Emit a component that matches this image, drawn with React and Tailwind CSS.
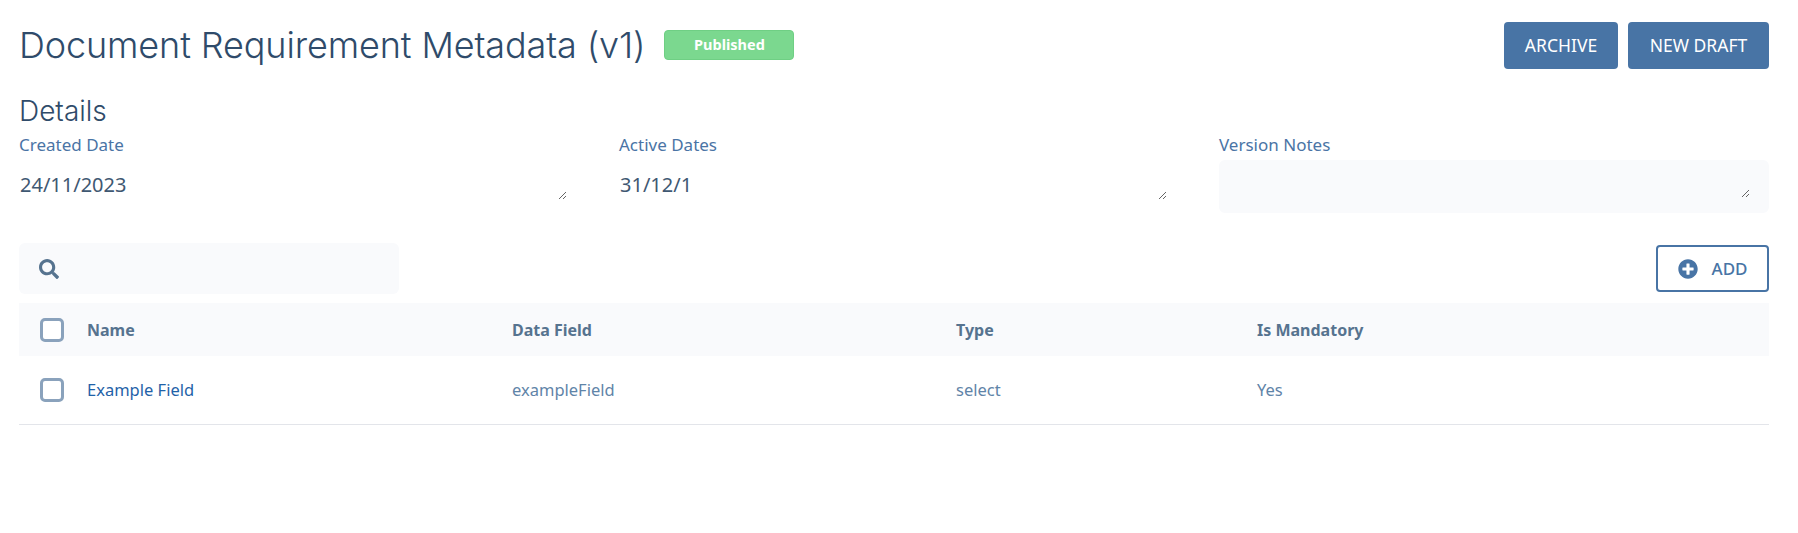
import React from 'react';
import { FaSearch, FaPlusCircle } from 'react-icons/fa';

const body = { fontFamily: '"Noto Sans", sans-serif' };
const heading = { fontFamily: 'Inter, sans-serif', fontWeight: 300 };

const Field = ({ label, value }) => (
  <div className="flex flex-col">
    <label className="h-[27px] text-[17px] leading-[24px] text-[#4a74a5]">{label}</label>
    <textarea
      readOnly
      value={value}
      className="mr-[2px] h-[40px] px-[1px] pt-[11px] text-[20px] leading-[27px] text-[#3f5872] outline-none"
    />
  </div>
);

const NotesField = ({ label }) => (
  <div className="flex flex-col">
    <label className="h-[27px] text-[17px] leading-[24px] text-[#4a74a5]">{label}</label>
    <textarea
      readOnly
      value=""
      className="h-[53px] w-full rounded-[6px] border-x-[19px] border-y-[15px] border-[#f9fafc] bg-[#f9fafc] outline-none"
    />
  </div>
);

const Checkbox = () => (
  <span className="block h-[24px] w-[24px] rounded-[5px] border-[3px] border-[#8aa2bc] bg-white" />
);

const Row = ({ cols, className, cellClass }) => (
  <div className={`flex items-center ${className}`}>
    <div className="w-[68px] pl-[21px]"><Checkbox /></div>
    <div className={`w-[425px] ${cellClass[0]}`}>{cols[0]}</div>
    <div className={`w-[444px] ${cellClass[1]}`}>{cols[1]}</div>
    <div className={`w-[301px] ${cellClass[1]}`}>{cols[2]}</div>
    <div className={`flex-1 ${cellClass[1]}`}>{cols[3]}</div>
  </div>
);

export default function App() {
  return (
    <div className="min-h-[533px] bg-white pl-[19px] pr-[29px] pt-[22px]" style={body}>
      <div className="flex h-[47px] items-start justify-between">
        <div className="flex items-start">
          <h1 className="text-[36px] leading-[47px] tracking-[-0.12px] text-[#2f4b6a]" style={heading}>
            Document Requirement Metadata (v1)
          </h1>
          <span className="ml-[19px] mt-[8px] flex h-[30px] w-[130px] items-center justify-center rounded-[4px] border border-[#6fcf84] bg-[#7bd88f] text-[14.5px] font-bold text-white">
            Published
          </span>
        </div>
        <div className="flex gap-[10px]">
          <button className="h-[47px] w-[114px] rounded-[4px] bg-[#4874a5] text-[17.5px] text-white">ARCHIVE</button>
          <button className="h-[47px] w-[141px] rounded-[4px] bg-[#4874a5] text-[17.5px] text-white">NEW DRAFT</button>
        </div>
      </div>

      <h2 className="mt-[26px] text-[28px] leading-[32px] text-[#2f4b6a]" style={heading}>Details</h2>

      <div className="mt-[6px] grid grid-cols-3 gap-x-[50px]">
        <Field label="Created Date" value="24/11/2023" />
        <Field label="Active Dates" value="31/12/1" />
        <NotesField label="Version Notes" />
      </div>

      <div className="mt-[30px] flex items-center justify-between">
        <div className="flex h-[51px] w-[380px] items-center rounded-[6px] bg-[#f9fafc] pl-[20px]">
          <FaSearch size={20} className="text-[#56738f]" />
        </div>
        <button className="flex h-[47px] w-[113px] items-center justify-center gap-[14px] rounded-[4px] border-2 border-[#4874a5] bg-white text-[17px] font-medium text-[#4874a5]">
          <FaPlusCircle size={20} />
          ADD
        </button>
      </div>

      <Row
        className="mt-[9px] h-[53px] bg-[#f9fafc]"
        cols={['Name', 'Data Field', 'Type', 'Is Mandatory']}
        cellClass={['text-[16px] font-bold text-[#56738f]', 'text-[16px] font-bold text-[#56738f]']}
      />
      <Row
        className="h-[69px] border-b border-[#e3e5ea]"
        cols={['Example Field', 'exampleField', 'select', 'Yes']}
        cellClass={['text-[16.5px] text-[#1f62a8]', 'text-[16.5px] text-[#5f84a8]']}
      />
    </div>
  );
}
